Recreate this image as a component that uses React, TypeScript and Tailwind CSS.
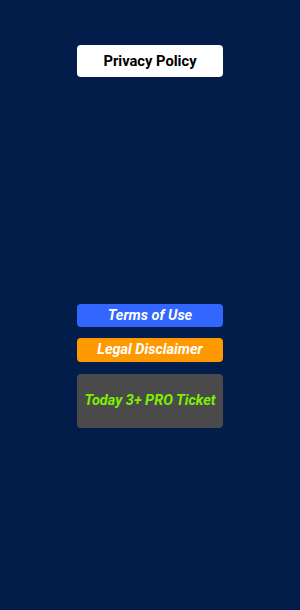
export default function App() {
  return (
    <div
      className="w-[300px] h-[610px] bg-[#021d4a] flex flex-col items-center"
      style={{ fontFamily: 'Roboto, "Liberation Sans", sans-serif' }}
    >
      <button className="mt-[45px] w-[146px] h-[32px] bg-white rounded-[4px] text-black text-[14.7px] font-bold">
        Privacy Policy
      </button>

      <button className="mt-[227px] w-[146px] h-[23px] bg-[#3366ff] rounded-[4px] text-white text-[14.5px] font-bold italic">
        Terms of Use
      </button>

      <button className="mt-[11px] w-[146px] h-[24px] bg-[#ff9900] rounded-[4px] text-white text-[14.5px] font-bold italic">
        Legal Disclaimer
      </button>

      <button className="mt-[12px] w-[146px] h-[54px] bg-[#4a4a4a] rounded-[4px] text-[#7cf000] text-[14.5px] font-bold italic">
        Today 3+ PRO Ticket
      </button>
    </div>
  );
}
